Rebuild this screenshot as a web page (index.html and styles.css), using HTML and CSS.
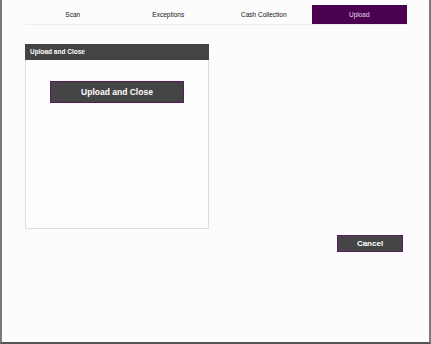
FILE: index.html
```html
<!DOCTYPE html>
<html lang="en">
<head>
  <meta charset="UTF-8">
  <title>Upload</title>
  <link rel="stylesheet" href="styles.css">
</head>
<body>
<div class="frame">
  <div class="tabs">
    <div class="tab">Scan</div>
    <div class="tab">Exceptions</div>
    <div class="tab">Cash Collection</div>
    <div class="tab active">Upload</div>
  </div>

  <div class="content">
    <div class="panel">
      <div class="panel-head">Upload and Close</div>
      <div class="panel-body">
        <button class="btn big">Upload and Close</button>
      </div>
    </div>
  </div>

  <div class="actions">
    <button class="btn small">Cancel</button>
  </div>
</div>
</body>
</html>
```

FILE: styles.css
```css
* { box-sizing: border-box; }

body {
  margin: 0;
  font-family: "Liberation Sans", Arial, sans-serif;
  background: #fcfcfc;
}

.frame {
  width: 431px;
  height: 344px;
  border-left: 2px solid #7a7a7a;
  border-right: 2px solid #7a7a7a;
  border-bottom: 2px solid #555;
  background: #fcfcfc;
  padding: 5px 22px 0 23px;
}

.tabs {
  display: grid;
  grid-template-columns: repeat(4, 1fr);
  height: 20px;
  border-bottom: 1px solid #ececec;
}

.tab {
  display: flex;
  align-items: center;
  justify-content: center;
  font-size: 6.5px;
  color: #111;
}

.tab.active {
  background: #4a0150;
  color: #e8dcea;
}

.content {
  margin-top: 19px;
}

.panel {
  width: 184px;
  height: 185px;
  border: 1px solid #dcdcdc;
  background: #fdfdfd;
}

.panel-head {
  background: #444;
  color: #fff;
  font-size: 6.5px;
  font-weight: bold;
  height: 16px;
  line-height: 16px;
  padding-left: 5px;
  margin: -1px -1px 0 -1px;
}

.panel-body {
  padding: 21px 0 0 24px;
}

.btn {
  background: #454545;
  color: #fff;
  font-family: "Liberation Sans", Arial, sans-serif;
  font-weight: bold;
  border: 1px solid #5a1a60;
  padding: 0;
}

.btn.big {
  width: 134px;
  height: 22px;
  font-size: 8.5px;
}

.actions {
  display: flex;
  justify-content: flex-end;
  margin-top: 6px;
  padding-right: 4px;
}

.btn.small {
  width: 66px;
  height: 17px;
  font-size: 8px;
}
```
